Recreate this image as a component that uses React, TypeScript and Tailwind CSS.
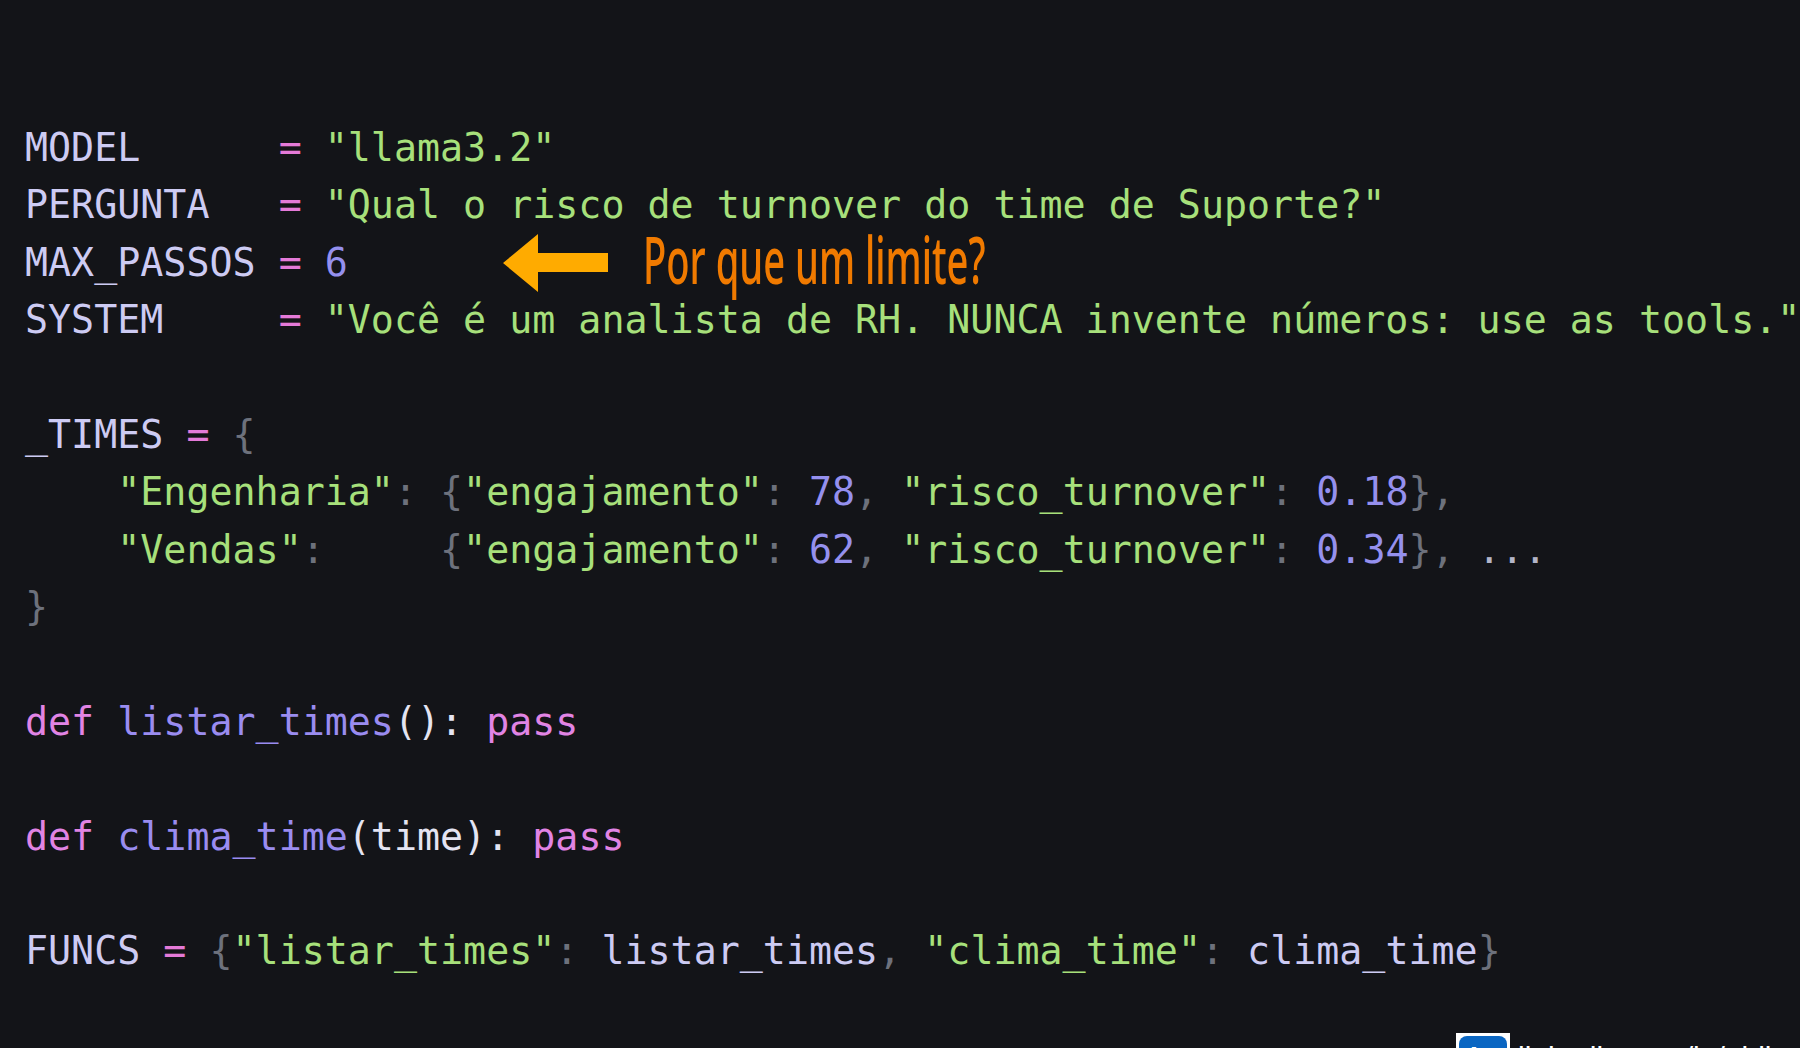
import React from "react";

type Tok = [string, string];

const ID = "text-[#cdcbf3]";
const EQ = "text-[#e47ad8]";
const STR = "text-[#a7e07b]";
const NUM = "text-[#9590ee]";
const PUN = "text-[#6d717c]";
const KW = "text-[#e184e4]";
const FN = "text-[#9a8cf0]";
const WH = "text-[#e4e4f2]";
const DOTS = "text-[#b4b4c8]";

const lines: Tok[][] = [
  [["MODEL      ", ID], ["=", EQ], [" ", ID], ['"llama3.2"', STR]],
  [["PERGUNTA   ", ID], ["=", EQ], [" ", ID], ['"Qual o risco de turnover do time de Suporte?"', STR]],
  [["MAX_PASSOS ", ID], ["=", EQ], [" ", ID], ["6", NUM]],
  [["SYSTEM     ", ID], ["=", EQ], [" ", ID], ['"Você é um analista de RH. NUNCA invente números: use as tools."', STR]],
  [],
  [["_TIMES ", ID], ["=", EQ], [" ", ID], ["{", PUN]],
  [
    ["    ", ID],
    ['"Engenharia"', STR],
    [": ", PUN],
    ["{", PUN],
    ['"engajamento"', STR],
    [": ", PUN],
    ["78", NUM],
    [", ", PUN],
    ['"risco_turnover"', STR],
    [": ", PUN],
    ["0.18", NUM],
    ["},", PUN],
  ],
  [
    ["    ", ID],
    ['"Vendas"', STR],
    [":     ", PUN],
    ["{", PUN],
    ['"engajamento"', STR],
    [": ", PUN],
    ["62", NUM],
    [", ", PUN],
    ['"risco_turnover"', STR],
    [": ", PUN],
    ["0.34", NUM],
    ["}, ", PUN],
    ["...", DOTS],
  ],
  [["}", PUN]],
  [],
  [["def", KW], [" ", WH], ["listar_times", FN], ["():", WH], [" ", WH], ["pass", KW]],
  [],
  [["def", KW], [" ", WH], ["clima_time", FN], ["(time):", WH], [" ", WH], ["pass", KW]],
  [],
  [
    ["FUNCS ", ID],
    ["=", EQ],
    [" ", ID],
    ["{", PUN],
    ['"listar_times"', STR],
    [": ", PUN],
    ["listar_times", ID],
    [", ", PUN],
    ['"clima_time"', STR],
    [": ", PUN],
    ["clima_time", ID],
    ["}", PUN],
  ],
];

export default function App() {
  return (
    <div className="relative w-[1800px] h-[1048px] overflow-hidden bg-[#131418]">
      <div className="pt-[119px] pl-[25px] font-['DejaVu_Sans_Mono',monospace] text-[38.3px] leading-[57.4px] whitespace-pre">
        {lines.map((ln, i) => (
          <div key={i} className="h-[57.4px]">
            {ln.map(([t, c], j) => (
              <span key={j} className={c}>
                {t}
              </span>
            ))}
          </div>
        ))}
      </div>

      {/* annotation */}
      <svg
        className="absolute left-[503px] top-[234px]"
        width="105"
        height="58"
        viewBox="0 0 105 58"
      >
        <polygon points="0,29 35,0 35,19 105,19 105,38 35,38 35,58" fill="#ffab00" />
      </svg>
      <div className="absolute left-[643px] top-[234px] origin-left scale-x-[0.578] whitespace-nowrap font-['Noto_Sans',sans-serif] font-medium text-[66px] leading-[48px] text-[#f07a00]">
        Por que um limite?
      </div>

      {/* linkedin footer (cut off) */}
      <div className="absolute left-[1456px] top-[1033px] flex items-start gap-[8px]">
        <div className="w-[54px] h-[50px] bg-white p-[3px]">
          <div className="w-full h-full rounded-[8px] bg-[#0a66c2] flex items-center justify-center text-white font-['Liberation_Sans',sans-serif] font-bold text-[30px]">
            in
          </div>
        </div>
        <div className="pt-[5px] font-['Liberation_Sans',sans-serif] text-[30px] leading-[40px] text-white whitespace-nowrap">
          linkedin.com/in/ablima
        </div>
      </div>
    </div>
  );
}
